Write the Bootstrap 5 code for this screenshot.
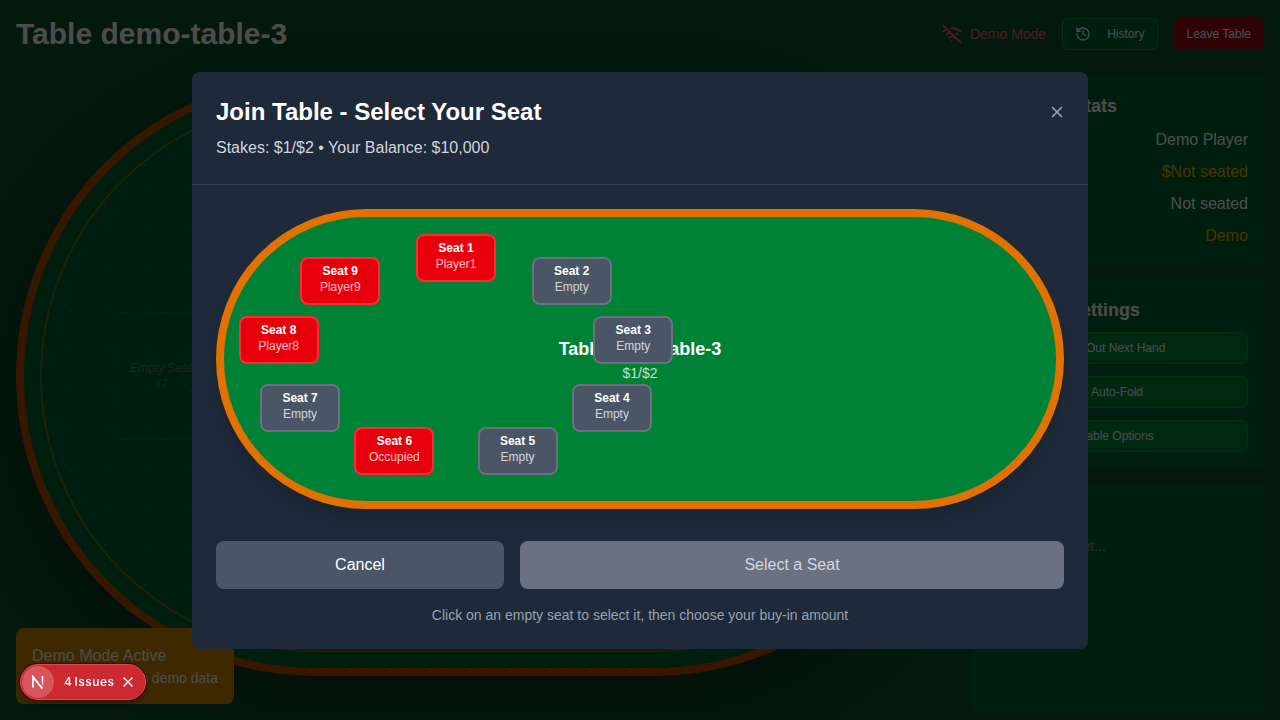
<!DOCTYPE html>
<html lang="en">
<head>
<meta charset="utf-8">
<meta name="viewport" content="width=device-width, initial-scale=1">
<title>Table demo-table-3</title>
<link href="https://cdn.jsdelivr.net/npm/bootstrap@5.3.0/dist/css/bootstrap.min.css" rel="stylesheet">
<style>
body{font-family:"Liberation Sans",Arial,sans-serif;font-size:16px;line-height:24px;color:#fff;background:#0d542b;height:100vh;overflow:hidden}
.page-title{font-size:30px;line-height:36px;font-weight:700}
.topbar{padding:16px;height:68px}
.t14{font-size:14px;line-height:20px}
.t12{font-size:12px;line-height:16px}
.t18{font-size:18px;line-height:28px;font-weight:700}
.c-red{color:#ff6467}
.c-gold{color:#f0b100}
.game-btn{height:32px;border:1px solid #00a63e;border-radius:6px;padding:0 12px;font-size:12px;line-height:16px;color:#fff;background:#008236;display:flex;align-items:center;justify-content:center}
.game-btn.dim{background:#016630;border-color:#00a63e}
.game-btn.leave{background:#9f0712;border-color:#c10007}
.layout{display:grid;grid-template-columns:minmax(0,1fr) 294px;gap:16px;padding:8px 16px}
.felt{height:600px;border:8px solid #bb4d00;border-radius:300px;background:#016630;position:relative;box-shadow:0 20px 60px rgba(0,0,0,.4)}
.felt-dots{position:absolute;inset:0;border-radius:inherit;background:radial-gradient(circle at 1px 1px,rgba(255,255,255,.1) 1px,transparent 0) 0 0/20px 20px}
.felt-ring{position:absolute;inset:16px;border:2px solid rgba(225,113,0,.5);border-radius:300px}
.ghost-seat{position:absolute;left:89px;top:228px;width:96px;height:128px;border:2px dashed rgba(106,114,130,.3);border-radius:8px;color:#6a7282}
.side-card{background:#016630;border-radius:8px;padding:16px}
.toast-demo{position:fixed;left:16px;bottom:16px;width:218px;height:76px;padding:16px;border-radius:8px;background:#d08700;white-space:nowrap}
.veil{position:fixed;inset:0;background:rgba(0,0,0,.7);z-index:20}
.join{width:896px;background:#1e2939;border-radius:8px}
.join-head{padding:24px;border-bottom:1px solid #364153}
.join-title{font-size:24px;line-height:32px;font-weight:700;margin:0 0 8px}
.c-mute{color:#d1d5dc}
.c-hint{color:#99a1af}
.mini{height:300px;border:8px solid #e17100;border-radius:150px;background:#008236;position:relative;box-shadow:0 10px 15px -3px rgba(0,0,0,.1),0 4px 6px -4px rgba(0,0,0,.1)}
.mini-stakes{opacity:.75}
.chair{position:absolute;width:80px;height:48px;padding:4px 0 0;border:2px solid #6a7282;border-radius:8px;background:#4a5565;color:#fff;font-size:12px;line-height:16px;text-align:center}
.chair span{display:block;opacity:.75}
.chair.taken{background:#e7000b;border-color:#fb2c36}
.act{height:48px;border:0;border-radius:8px;background:#4a5565;color:#fff}
.act.off{background:#6a7282;color:#d1d5dc}
.issues{position:fixed;left:20px;top:664px;width:126px;height:36px;border-radius:18px;background:#ca2a30;border:1px solid #e5484d;box-shadow:0 0 0 1px #3a0b0d,0 4px 8px rgba(0,0,0,.3);z-index:30;font:500 12px/20px Inter,sans-serif;letter-spacing:.5px;padding-left:1px}
.issues-mark{width:32px;height:32px;border-radius:50%;background:#d7565b}
.issues-text{width:51px;margin-left:10px;word-spacing:-1.5px;white-space:nowrap}
</style>
</head>
<body>
<header class="topbar d-flex justify-content-between align-items-center">
  <h1 class="page-title m-0">Table demo-table-3</h1>
  <div class="d-flex align-items-center gap-3">
    <div class="d-flex align-items-center gap-2 t14 c-red">
      <svg width="20" height="20" viewBox="0 0 24 24" fill="none" stroke="currentColor" stroke-width="2" stroke-linecap="round" stroke-linejoin="round"><path d="M12 20h.01M8.5 16.43a5 5 0 0 1 7 0M5 12.86a10 10 0 0 1 5.17-2.69M19 12.86a10 10 0 0 0-2-1.52M2 8.82a15 15 0 0 1 4.18-2.64M22 8.82a15 15 0 0 0-11.29-3.76M2 2l20 20"/></svg>
      <span>Demo Mode</span>
    </div>
    <button class="game-btn dim gap-3"><svg width="16" height="16" viewBox="0 0 24 24" fill="none" stroke="currentColor" stroke-width="2" stroke-linecap="round" stroke-linejoin="round"><path d="M3 12a9 9 0 1 0 9-9 9.75 9.75 0 0 0-6.74 2.74L3 8M3 3v5h5M12 7v5l4 2"/></svg>History</button>
    <button class="game-btn leave">Leave Table</button>
  </div>
</header>
<main class="layout">
  <section class="felt">
    <div class="felt-dots"></div>
    <div class="felt-ring"></div>
    <div class="ghost-seat t12 d-flex flex-column align-items-center justify-content-center"><span>Empty Seat</span><span class="opacity-75">#7</span></div>
  </section>
  <aside class="d-flex flex-column gap-3">
    <div class="side-card">
      <div class="t18 d-flex align-items-center gap-2 mb-2"><svg width="20" height="20" viewBox="0 0 24 24" fill="none" stroke="currentColor" stroke-width="2"><circle cx="12" cy="7" r="4"/><path d="M5 21a7 7 0 0 1 14 0"/></svg>Player Stats</div>
      <div class="d-flex flex-column gap-2">
        <div class="d-flex justify-content-between"><span>Name:</span><span>Demo Player</span></div>
        <div class="d-flex justify-content-between"><span>Chips:</span><span class="c-gold">$Not seated</span></div>
        <div class="d-flex justify-content-between"><span>Position:</span><span>Not seated</span></div>
        <div class="d-flex justify-content-between"><span>Mode:</span><span class="c-gold">Demo</span></div>
      </div>
    </div>
    <div class="side-card">
      <div class="t18 d-flex align-items-center gap-2 mb-2"><svg width="20" height="20" viewBox="0 0 24 24" fill="none" stroke="currentColor" stroke-width="2"><circle cx="12" cy="12" r="4"/><circle cx="12" cy="12" r="9"/></svg>Game Settings</div>
      <div class="d-grid" style="gap:12px">
        <button class="game-btn">Sit Out Next Hand</button>
        <button class="game-btn">Auto-Fold</button>
        <button class="game-btn">Table Options</button>
      </div>
    </div>
    <div class="side-card" style="height:228px">
      <div class="t18 mb-2">Chat</div>
      <div class="t14 c-hint mt-2">No messages yet...</div>
    </div>
  </aside>
</main>
<div class="toast-demo">
  <div>Demo Mode Active</div>
  <div class="t14 d-flex justify-content-end"><span>Playing locally with demo data</span></div>
</div>

<div class="veil d-flex align-items-center justify-content-center">
  <div class="join" role="dialog" aria-label="Join Table">
    <div class="join-head">
      <div class="d-flex justify-content-between">
        <h2 class="join-title">Join Table - Select Your Seat</h2>
        <svg class="c-hint" style="margin-top:9px" width="14" height="14" viewBox="0 0 14 14" fill="none" stroke="currentColor" stroke-width="1.7" stroke-linecap="round"><path d="M2.5 2.5l9 9M11.5 2.5l-9 9"/></svg>
      </div>
      <div class="c-mute">Stakes: $1/$2 • Your Balance: $10,000</div>
    </div>
    <div class="p-4">
      <div class="mini d-flex flex-column align-items-center justify-content-center">
        <div class="t18">Table demo-table-3</div>
        <div class="t14 mini-stakes">$1/$2</div>
        <div class="chair taken" style="left:192px;top:17px"><b>Seat 1</b><span>Player1</span></div>
        <div class="chair" style="left:307.7px;top:40px"><b>Seat 2</b><span>Empty</span></div>
        <div class="chair" style="left:369.3px;top:99px"><b>Seat 3</b><span>Empty</span></div>
        <div class="chair" style="left:347.9px;top:167px"><b>Seat 4</b><span>Empty</span></div>
        <div class="chair" style="left:253.6px;top:210px"><b>Seat 5</b><span>Empty</span></div>
        <div class="chair taken" style="left:130.4px;top:210px"><b>Seat 6</b><span>Occupied</span></div>
        <div class="chair" style="left:36.1px;top:167px"><b>Seat 7</b><span>Empty</span></div>
        <div class="chair taken" style="left:14.7px;top:99px"><b>Seat 8</b><span>Player8</span></div>
        <div class="chair taken" style="left:76.3px;top:40px"><b>Seat 9</b><span>Player9</span></div>
      </div>
      <div class="d-flex gap-3" style="margin-top:32px">
        <button class="act" style="width:288px">Cancel</button>
        <button class="act off flex-grow-1">Select a Seat</button>
      </div>
      <div class="t14 c-hint text-center mt-3">Click on an empty seat to select it, then choose your buy-in amount</div>
    </div>
  </div>
</div>

<div class="issues d-flex align-items-center">
  <div class="issues-mark d-flex align-items-center justify-content-center">
    <svg width="14" height="14" viewBox="0 0 14 14" fill="none" stroke-width="1.8"><defs><linearGradient id="fade" x1="0" y1="0" x2="0" y2="1"><stop offset=".4" stop-color="#fff"/><stop offset="1" stop-color="#fff" stop-opacity=".1"/></linearGradient></defs><path d="M2 12.5V1.8L11.2 13.5" stroke="#fff"/><path d="M10.7 1h1.6v11h-1.6z" fill="url(#fade)"/></svg>
  </div>
  <span class="issues-text">4 Issues</span>
  <svg style="margin-left:7px" width="12" height="12" viewBox="0 0 12 12" stroke="#fff" stroke-width="1.4"><path d="M1.5 1.5l9 9M10.5 1.5l-9 9"/></svg>
</div>
<script src="https://cdn.jsdelivr.net/npm/bootstrap@5.3.0/dist/js/bootstrap.bundle.min.js"></script>
</body>
</html>
